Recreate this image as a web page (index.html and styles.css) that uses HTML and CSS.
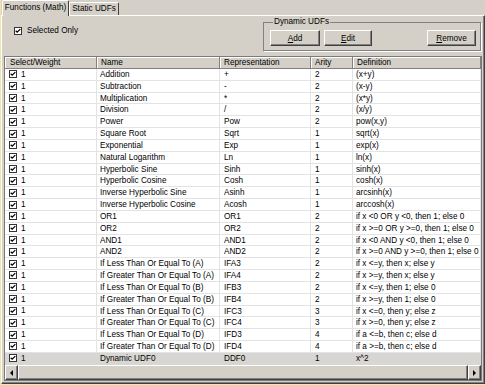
FILE: index.html
```html
<!DOCTYPE html>
<html>
<head>
  <meta charset="UTF-8">
  <title>Functions (Math)</title>
  <link rel="stylesheet" href="styles.css">
</head>
<body>
  <div class="window">
    <div class="tabs">
      <div class="tab active">Functions (Math)</div>
      <div class="tab">Static UDFs</div>
    </div>
    <div class="panel">
      <div class="toolbar">
        <label class="check-label">
          <svg class="chk" width="8" height="8" viewBox="0 0 8 8"><rect x=".5" y=".5" width="7" height="7" fill="#fff" stroke="#333"/><path d="M1.7 3.7 3.2 5.2 6.3 2.1" fill="none" stroke="#000" stroke-width="1.3"/></svg>
          Selected Only
        </label>
        <fieldset class="group">
          <legend>Dynamic UDFs</legend>
          <div class="group-buttons">
            <button class="btn btn-add"><u>A</u>dd</button>
            <button class="btn btn-edit"><u>E</u>dit</button>
            <button class="btn btn-remove"><u>R</u>emove</button>
          </div>
        </fieldset>
      </div>

      <div class="grid">
        <div class="grid-head">
          <div>Select/Weight</div>
          <div>Name</div>
          <div>Representation</div>
          <div>Arity</div>
          <div>Definition</div>
        </div>
        <div class="grid-body">
          <div class="row"><div class="sel"><svg class="chk" width="8" height="8" viewBox="0 0 8 8"><rect x=".5" y=".5" width="7" height="7" fill="#fff" stroke="#333"/><path d="M1.7 3.7 3.2 5.2 6.3 2.1" fill="none" stroke="#000" stroke-width="1.3"/></svg>1</div><div>Addition</div><div>+</div><div>2</div><div>(x+y)</div></div>
          <div class="row"><div class="sel"><svg class="chk" width="8" height="8" viewBox="0 0 8 8"><rect x=".5" y=".5" width="7" height="7" fill="#fff" stroke="#333"/><path d="M1.7 3.7 3.2 5.2 6.3 2.1" fill="none" stroke="#000" stroke-width="1.3"/></svg>1</div><div>Subtraction</div><div>-</div><div>2</div><div>(x-y)</div></div>
          <div class="row"><div class="sel"><svg class="chk" width="8" height="8" viewBox="0 0 8 8"><rect x=".5" y=".5" width="7" height="7" fill="#fff" stroke="#333"/><path d="M1.7 3.7 3.2 5.2 6.3 2.1" fill="none" stroke="#000" stroke-width="1.3"/></svg>1</div><div>Multiplication</div><div>*</div><div>2</div><div>(x*y)</div></div>
          <div class="row"><div class="sel"><svg class="chk" width="8" height="8" viewBox="0 0 8 8"><rect x=".5" y=".5" width="7" height="7" fill="#fff" stroke="#333"/><path d="M1.7 3.7 3.2 5.2 6.3 2.1" fill="none" stroke="#000" stroke-width="1.3"/></svg>1</div><div>Division</div><div>/</div><div>2</div><div>(x/y)</div></div>
          <div class="row"><div class="sel"><svg class="chk" width="8" height="8" viewBox="0 0 8 8"><rect x=".5" y=".5" width="7" height="7" fill="#fff" stroke="#333"/><path d="M1.7 3.7 3.2 5.2 6.3 2.1" fill="none" stroke="#000" stroke-width="1.3"/></svg>1</div><div>Power</div><div>Pow</div><div>2</div><div>pow(x,y)</div></div>
          <div class="row"><div class="sel"><svg class="chk" width="8" height="8" viewBox="0 0 8 8"><rect x=".5" y=".5" width="7" height="7" fill="#fff" stroke="#333"/><path d="M1.7 3.7 3.2 5.2 6.3 2.1" fill="none" stroke="#000" stroke-width="1.3"/></svg>1</div><div>Square Root</div><div>Sqrt</div><div>1</div><div>sqrt(x)</div></div>
          <div class="row"><div class="sel"><svg class="chk" width="8" height="8" viewBox="0 0 8 8"><rect x=".5" y=".5" width="7" height="7" fill="#fff" stroke="#333"/><path d="M1.7 3.7 3.2 5.2 6.3 2.1" fill="none" stroke="#000" stroke-width="1.3"/></svg>1</div><div>Exponential</div><div>Exp</div><div>1</div><div>exp(x)</div></div>
          <div class="row"><div class="sel"><svg class="chk" width="8" height="8" viewBox="0 0 8 8"><rect x=".5" y=".5" width="7" height="7" fill="#fff" stroke="#333"/><path d="M1.7 3.7 3.2 5.2 6.3 2.1" fill="none" stroke="#000" stroke-width="1.3"/></svg>1</div><div>Natural Logarithm</div><div>Ln</div><div>1</div><div>ln(x)</div></div>
          <div class="row"><div class="sel"><svg class="chk" width="8" height="8" viewBox="0 0 8 8"><rect x=".5" y=".5" width="7" height="7" fill="#fff" stroke="#333"/><path d="M1.7 3.7 3.2 5.2 6.3 2.1" fill="none" stroke="#000" stroke-width="1.3"/></svg>1</div><div>Hyperbolic Sine</div><div>Sinh</div><div>1</div><div>sinh(x)</div></div>
          <div class="row"><div class="sel"><svg class="chk" width="8" height="8" viewBox="0 0 8 8"><rect x=".5" y=".5" width="7" height="7" fill="#fff" stroke="#333"/><path d="M1.7 3.7 3.2 5.2 6.3 2.1" fill="none" stroke="#000" stroke-width="1.3"/></svg>1</div><div>Hyperbolic Cosine</div><div>Cosh</div><div>1</div><div>cosh(x)</div></div>
          <div class="row"><div class="sel"><svg class="chk" width="8" height="8" viewBox="0 0 8 8"><rect x=".5" y=".5" width="7" height="7" fill="#fff" stroke="#333"/><path d="M1.7 3.7 3.2 5.2 6.3 2.1" fill="none" stroke="#000" stroke-width="1.3"/></svg>1</div><div>Inverse Hyperbolic Sine</div><div>Asinh</div><div>1</div><div>arcsinh(x)</div></div>
          <div class="row"><div class="sel"><svg class="chk" width="8" height="8" viewBox="0 0 8 8"><rect x=".5" y=".5" width="7" height="7" fill="#fff" stroke="#333"/><path d="M1.7 3.7 3.2 5.2 6.3 2.1" fill="none" stroke="#000" stroke-width="1.3"/></svg>1</div><div>Inverse Hyperbolic Cosine</div><div>Acosh</div><div>1</div><div>arccosh(x)</div></div>
          <div class="row"><div class="sel"><svg class="chk" width="8" height="8" viewBox="0 0 8 8"><rect x=".5" y=".5" width="7" height="7" fill="#fff" stroke="#333"/><path d="M1.7 3.7 3.2 5.2 6.3 2.1" fill="none" stroke="#000" stroke-width="1.3"/></svg>1</div><div>OR1</div><div>OR1</div><div>2</div><div>if x &lt;0 OR y &lt;0, then 1; else 0</div></div>
          <div class="row"><div class="sel"><svg class="chk" width="8" height="8" viewBox="0 0 8 8"><rect x=".5" y=".5" width="7" height="7" fill="#fff" stroke="#333"/><path d="M1.7 3.7 3.2 5.2 6.3 2.1" fill="none" stroke="#000" stroke-width="1.3"/></svg>1</div><div>OR2</div><div>OR2</div><div>2</div><div>if x &gt;=0 OR y &gt;=0, then 1; else 0</div></div>
          <div class="row"><div class="sel"><svg class="chk" width="8" height="8" viewBox="0 0 8 8"><rect x=".5" y=".5" width="7" height="7" fill="#fff" stroke="#333"/><path d="M1.7 3.7 3.2 5.2 6.3 2.1" fill="none" stroke="#000" stroke-width="1.3"/></svg>1</div><div>AND1</div><div>AND1</div><div>2</div><div>if x &lt;0 AND y &lt;0, then 1; else 0</div></div>
          <div class="row"><div class="sel"><svg class="chk" width="8" height="8" viewBox="0 0 8 8"><rect x=".5" y=".5" width="7" height="7" fill="#fff" stroke="#333"/><path d="M1.7 3.7 3.2 5.2 6.3 2.1" fill="none" stroke="#000" stroke-width="1.3"/></svg>1</div><div>AND2</div><div>AND2</div><div>2</div><div>if x &gt;=0 AND y &gt;=0, then 1; else 0</div></div>
          <div class="row"><div class="sel"><svg class="chk" width="8" height="8" viewBox="0 0 8 8"><rect x=".5" y=".5" width="7" height="7" fill="#fff" stroke="#333"/><path d="M1.7 3.7 3.2 5.2 6.3 2.1" fill="none" stroke="#000" stroke-width="1.3"/></svg>1</div><div>If Less Than Or Equal To (A)</div><div>IFA3</div><div>2</div><div>if x &lt;=y, then x; else y</div></div>
          <div class="row"><div class="sel"><svg class="chk" width="8" height="8" viewBox="0 0 8 8"><rect x=".5" y=".5" width="7" height="7" fill="#fff" stroke="#333"/><path d="M1.7 3.7 3.2 5.2 6.3 2.1" fill="none" stroke="#000" stroke-width="1.3"/></svg>1</div><div>If Greater Than Or Equal To (A)</div><div>IFA4</div><div>2</div><div>if x &gt;=y, then x; else y</div></div>
          <div class="row"><div class="sel"><svg class="chk" width="8" height="8" viewBox="0 0 8 8"><rect x=".5" y=".5" width="7" height="7" fill="#fff" stroke="#333"/><path d="M1.7 3.7 3.2 5.2 6.3 2.1" fill="none" stroke="#000" stroke-width="1.3"/></svg>1</div><div>If Less Than Or Equal To (B)</div><div>IFB3</div><div>2</div><div>if x &lt;=y, then 1; else 0</div></div>
          <div class="row"><div class="sel"><svg class="chk" width="8" height="8" viewBox="0 0 8 8"><rect x=".5" y=".5" width="7" height="7" fill="#fff" stroke="#333"/><path d="M1.7 3.7 3.2 5.2 6.3 2.1" fill="none" stroke="#000" stroke-width="1.3"/></svg>1</div><div>If Greater Than Or Equal To (B)</div><div>IFB4</div><div>2</div><div>if x &gt;=y, then 1; else 0</div></div>
          <div class="row"><div class="sel"><svg class="chk" width="8" height="8" viewBox="0 0 8 8"><rect x=".5" y=".5" width="7" height="7" fill="#fff" stroke="#333"/><path d="M1.7 3.7 3.2 5.2 6.3 2.1" fill="none" stroke="#000" stroke-width="1.3"/></svg>1</div><div>If Less Than Or Equal To (C)</div><div>IFC3</div><div>3</div><div>if x &lt;=0, then y; else z</div></div>
          <div class="row"><div class="sel"><svg class="chk" width="8" height="8" viewBox="0 0 8 8"><rect x=".5" y=".5" width="7" height="7" fill="#fff" stroke="#333"/><path d="M1.7 3.7 3.2 5.2 6.3 2.1" fill="none" stroke="#000" stroke-width="1.3"/></svg>1</div><div>If Greater Than Or Equal To (C)</div><div>IFC4</div><div>3</div><div>if x &gt;=0, then y; else z</div></div>
          <div class="row"><div class="sel"><svg class="chk" width="8" height="8" viewBox="0 0 8 8"><rect x=".5" y=".5" width="7" height="7" fill="#fff" stroke="#333"/><path d="M1.7 3.7 3.2 5.2 6.3 2.1" fill="none" stroke="#000" stroke-width="1.3"/></svg>1</div><div>If Less Than Or Equal To (D)</div><div>IFD3</div><div>4</div><div>if a &lt;=b, then c; else d</div></div>
          <div class="row"><div class="sel"><svg class="chk" width="8" height="8" viewBox="0 0 8 8"><rect x=".5" y=".5" width="7" height="7" fill="#fff" stroke="#333"/><path d="M1.7 3.7 3.2 5.2 6.3 2.1" fill="none" stroke="#000" stroke-width="1.3"/></svg>1</div><div>If Greater Than Or Equal To (D)</div><div>IFD4</div><div>4</div><div>if a &gt;=b, then c; else d</div></div>
          <div class="row selected"><div class="sel"><svg class="chk" width="8" height="8" viewBox="0 0 8 8"><rect x=".5" y=".5" width="7" height="7" fill="#fff" stroke="#333"/><path d="M1.7 3.7 3.2 5.2 6.3 2.1" fill="none" stroke="#000" stroke-width="1.3"/></svg>1</div><div>Dynamic UDF0</div><div>DDF0</div><div>1</div><div>x^2</div></div>
        </div>
        <div class="hscroll">
          <div class="sb-btn"><span class="arrow-left"></span></div>
          <div class="sb-thumb"></div>
          <div class="sb-btn"><span class="arrow-right"></span></div>
        </div>
      </div>
    </div>
  </div>
</body>
</html>
```

FILE: styles.css
```css
body {
  margin: 0;
  background-color: #d4d0c8;
  font-family: "Liberation Sans", Arial, sans-serif;
  font-size: 8.2px;
  color: #000;
}
.window {
  width: 485px;
  height: 385px;
  box-sizing: border-box;
  border-left: 1px solid #efe7a1;
  border-bottom: 1px solid #efe7a1;
  display: flex;
  flex-direction: column;
}

/* tabs */
.tabs {
  display: flex;
  align-items: flex-end;
  height: 15px;
  padding-left: 1px;
}
.tab {
  box-sizing: border-box;
  height: 13px;
  line-height: 12px;
  width: 50px;
  text-align: center;
  border: 1px solid;
  border-color: #fff #404040 transparent #fff;
  border-bottom: none;
  border-radius: 2px 2px 0 0;
}
.tab.active {
  position: relative;
  width: 67px;
  height: 16px;
  line-height: 14px;
  margin-bottom: -1px;
  background-color: #d4d0c8;
}

/* panel */
.panel {
  flex: 1;
  display: flex;
  flex-direction: column;
  border: 1px solid;
  border-color: #fff #404040 #404040 #fff;
  box-shadow: inset -1px -1px 0 #808080;
  padding: 0 2px 2px 2px;
}
.toolbar {
  height: 40px;
  display: flex;
  align-items: flex-start;
}
.check-label {
  display: flex;
  align-items: center;
  gap: 5px;
  margin: 10px 0 0 10px;
  line-height: 10px;
}
.chk {
  display: block;
  flex: none;
}
.group {
  margin: 1px 1px 0 auto;
  width: 218px;
  box-sizing: border-box;
  border: 1px solid #808080;
  box-shadow: 1px 1px 0 #fff;
  padding: 3px 4px 4px 6px;
  min-width: 0;
}
.group legend {
  padding: 0 1px;
  margin-left: 3px;
  line-height: 10px;
}
.group-buttons {
  display: flex;
  gap: 4px;
}
.btn {
  font: inherit;
  color: #000;
  height: 16px;
  padding: 0;
  background-color: #d4d0c8;
  border: 1px solid;
  border-color: #fff #404040 #404040 #fff;
  box-shadow: inset -1px -1px 0 #808080;
}
.btn-add { width: 50px; }
.btn-edit { width: 48px; }
.btn-remove { width: 49px; margin-left: auto; }

/* grid */
.grid {
  flex: 1;
  display: flex;
  flex-direction: column;
  border: 1px solid #7a7a7a;
  background-color: #fff;
  overflow: hidden;
}
.grid-head,
.row {
  display: grid;
  grid-template-columns: 92px 123px 91px 42px 1fr;
}
.grid-head div {
  height: 12px;
  box-sizing: border-box;
  line-height: 11px;
  padding-left: 4px;
  background-color: #d4d0c8;
  border-right: 1px solid #808080;
  border-bottom: 1px solid #808080;
  box-shadow: inset 1px 1px 0 #fff;
  white-space: nowrap;
  overflow: hidden;
}
.grid-head div:first-child {
  padding-left: 5px;
}
.grid-body {
  flex: 1;
  overflow: hidden;
}
.row {
  height: 11.84px;
}
.row div {
  box-sizing: border-box;
  border-right: 1px solid #e3e3e3;
  border-bottom: 1px solid #e3e3e3;
  line-height: 11px;
  padding-left: 3px;
  white-space: nowrap;
  overflow: hidden;
}
.row div:nth-child(3),
.row div:nth-child(4) {
  padding-left: 4px;
}
.row .sel {
  display: flex;
  align-items: center;
  gap: 4px;
  padding-left: 4px;
}
.row.selected div {
  background-color: #d8d6d2;
  border-color: #d8d6d2;
}

/* horizontal scrollbar */
.hscroll {
  height: 15px;
  display: flex;
  background-color: #d4d0c8;
}
.sb-btn,
.sb-thumb {
  box-sizing: border-box;
  border: 1px solid;
  border-color: #fff #404040 #404040 #fff;
  box-shadow: inset -1px -1px 0 #808080;
}
.sb-btn {
  width: 13px;
  display: flex;
  align-items: center;
  justify-content: center;
}
.sb-thumb {
  flex: 1;
}
.arrow-left {
  border-right: 3px solid #000;
  border-top: 3px solid transparent;
  border-bottom: 3px solid transparent;
}
.arrow-right {
  border-left: 3px solid #000;
  border-top: 3px solid transparent;
  border-bottom: 3px solid transparent;
}
```
